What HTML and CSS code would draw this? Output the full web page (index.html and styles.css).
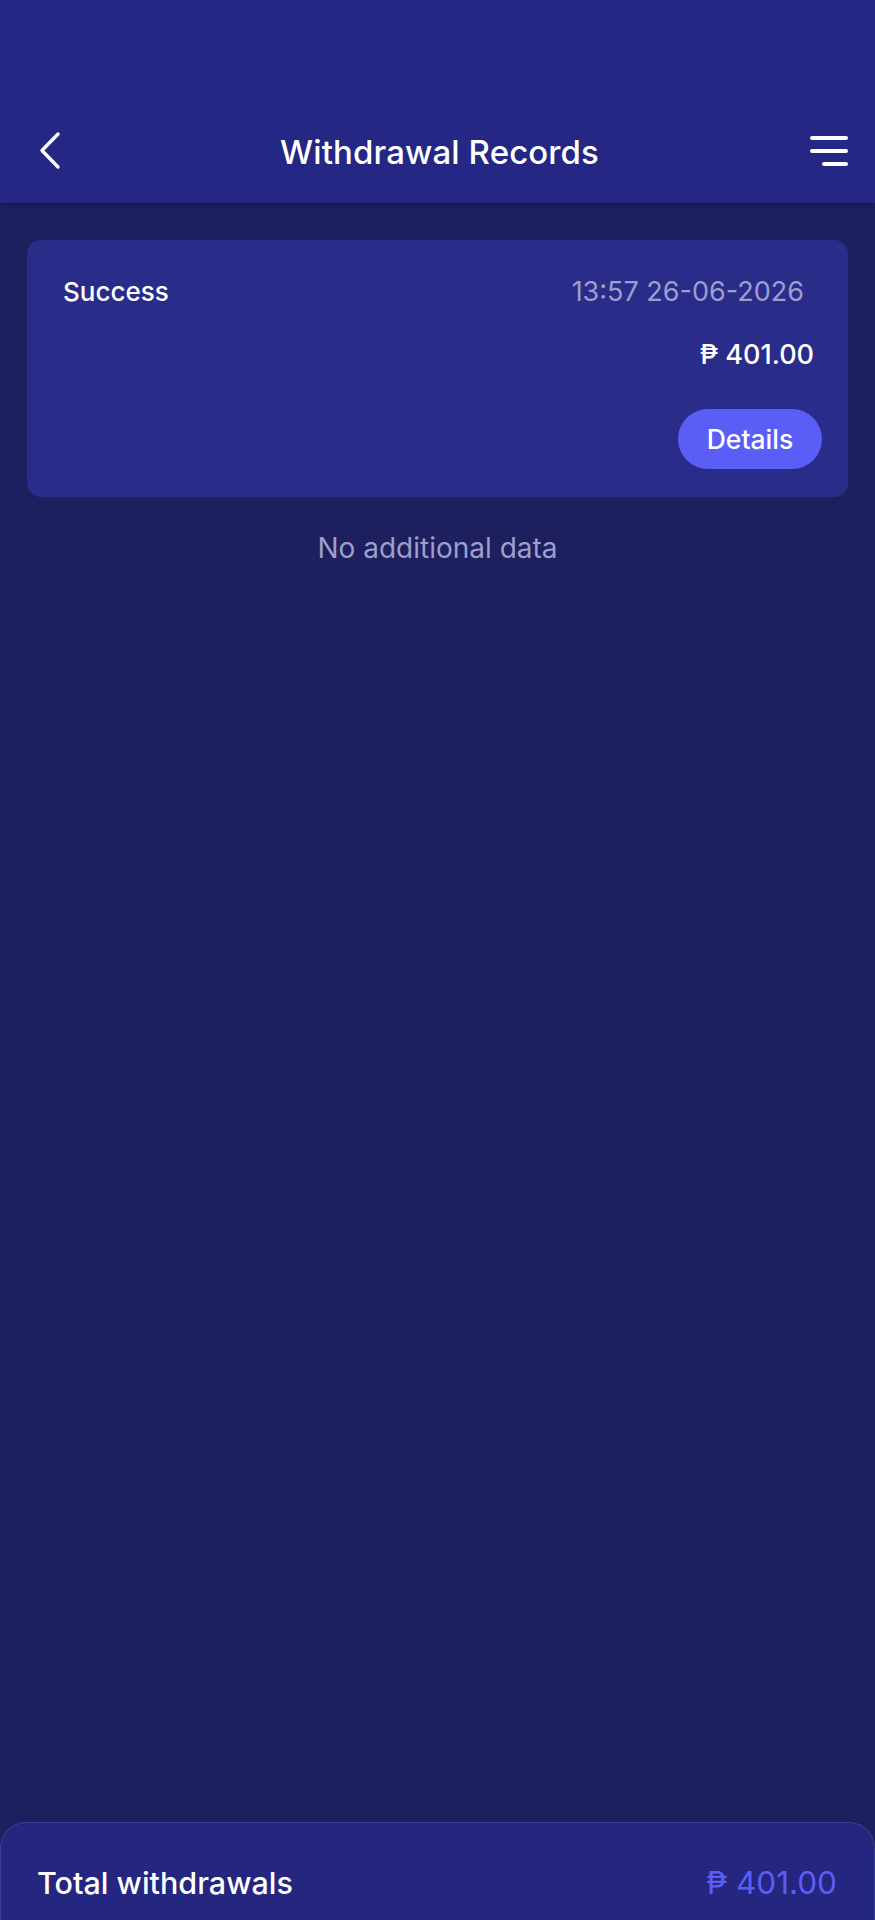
FILE: index.html
```html
<!DOCTYPE html>
<html lang="en">
<head>
<meta charset="utf-8">
<title>Withdrawal Records</title>
<link rel="stylesheet" href="styles.css">
</head>
<body>
<div class="page">
  <header class="topbar">
    <div class="topbar-row">
      <button class="icon-btn back" aria-label="Back">
        <svg width="24" height="40" viewBox="0 0 24 40"><path d="M20 3 L4 19.5 L20 36" fill="none" stroke="#fff" stroke-width="3.4" stroke-linecap="round" stroke-linejoin="round"/></svg>
      </button>
      <h1 class="title">Withdrawal Records</h1>
      <button class="icon-btn menu" aria-label="Menu">
        <svg width="40" height="34" viewBox="0 0 40 34"><g stroke="#fff" stroke-width="4" stroke-linecap="round"><line x1="3" y1="4" x2="37" y2="4"/><line x1="3" y1="17" x2="37" y2="17"/><line x1="15" y1="30" x2="37" y2="30"/></g></svg>
      </button>
    </div>
  </header>

  <main class="content">
    <section class="record-card">
      <div class="record-top">
        <span class="status">Success</span>
        <span class="date">13:57 26-06-2026</span>
      </div>
      <div class="amount">₱ 401.00</div>
      <div class="actions">
        <button class="details-btn">Details</button>
      </div>
    </section>
    <p class="no-more">No additional data</p>
  </main>

  <footer class="total-bar">
    <span class="total-label">Total withdrawals</span>
    <span class="total-value">₱ 401.00</span>
  </footer>
</div>
</body>
</html>
```

FILE: styles.css
```css
* { box-sizing: border-box; }

html, body {
  margin: 0;
  padding: 0;
}

body {
  background: #1e1f5f;
  font-family: "Inter", "Noto Sans", "Liberation Sans", sans-serif;
  color: #ffffff;
}

.page {
  min-height: 100vh;
  display: flex;
  flex-direction: column;
}

.topbar {
  background: #242784;
  height: 203px;
  padding-top: 101px;
  box-shadow: 0 2px 6px rgba(10, 10, 50, 0.35);
}

.topbar-row {
  height: 102px;
  display: flex;
  align-items: center;
  justify-content: space-between;
  padding: 0 26px 0 30px;
}

.icon-btn {
  background: none;
  border: 0;
  padding: 0;
  display: flex;
  align-items: center;
  justify-content: center;
}

.back { width: 40px; margin-top: -2px; }
.menu { width: 40px; margin-top: -3px; }

.title {
  margin: 0;
  font-size: 33px;
  font-weight: 500;
  letter-spacing: 0.1px;
  color: #ffffff;
}

.content {
  flex: 1;
  padding: 37px 27px 0;
}

.record-card {
  background: #2a2c8a;
  border-radius: 14px;
  height: 257px;
  padding: 35px 26px 0 36px;
  display: flex;
  flex-direction: column;
}

.record-top {
  display: flex;
  justify-content: space-between;
  align-items: center;
  padding-right: 18px;
}

.status {
  font-size: 26px;
  font-weight: 500;
}

.date {
  font-size: 27px;
  color: #9c9ecb;
}

.amount {
  margin-top: 30px;
  align-self: flex-end;
  padding-right: 8px;
  font-size: 27px;
  font-weight: 500;
}

.actions {
  margin-top: 38px;
  display: flex;
  justify-content: flex-end;
}

.details-btn {
  width: 144px;
  height: 60px;
  border: 0;
  border-radius: 30px;
  background: #5a5ef6;
  color: #ffffff;
  font-family: inherit;
  font-size: 26.5px;
  font-weight: 500;
}

.no-more {
  margin: 34px 0 0;
  text-align: center;
  font-size: 28px;
  color: #9c9ecb;
}

.total-bar {
  height: 98px;
  background: #24267f;
  border: 1.5px solid #3a3d94;
  border-bottom: 0;
  border-radius: 26px 26px 0 0;
  display: flex;
  align-items: center;
  justify-content: space-between;
  padding: 22px 37px 0 36px;
}

.total-label {
  font-size: 30.5px;
  font-weight: 500;
}

.total-value {
  font-size: 31.5px;
  color: #5a5ef6;
}
```
